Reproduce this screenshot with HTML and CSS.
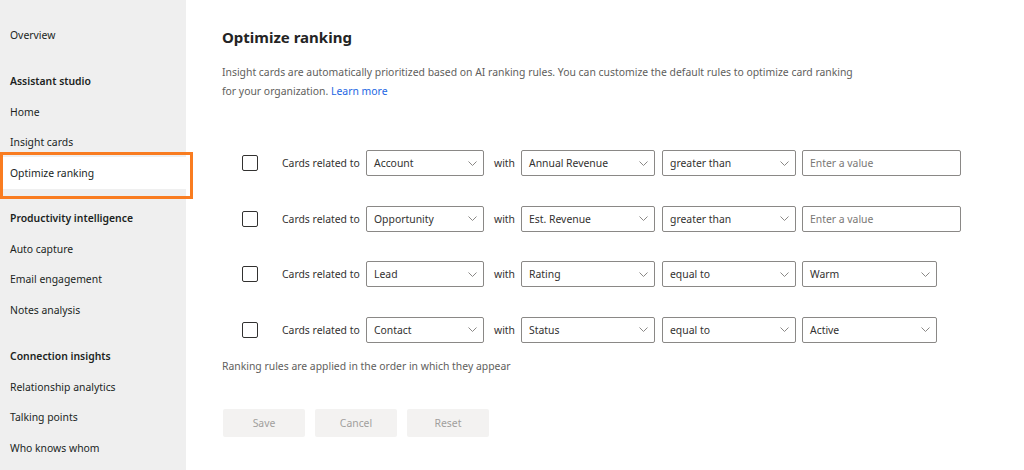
FILE: index.html
```html
<!DOCTYPE html>
<html lang="en">
<head>
<meta charset="utf-8">
<title>Optimize ranking</title>
<link rel="stylesheet" href="styles.css">
</head>
<body>
<div class="app">
  <nav class="sidebar">
    <div class="group">
      <a class="nav-item">Overview</a>
    </div>
    <div class="group">
      <div class="nav-head">Assistant studio</div>
      <a class="nav-item">Home</a>
      <a class="nav-item">Insight cards</a>
      <a class="nav-item active">Optimize ranking</a>
    </div>
    <div class="group">
      <div class="nav-head">Productivity intelligence</div>
      <a class="nav-item">Auto capture</a>
      <a class="nav-item">Email engagement</a>
      <a class="nav-item">Notes analysis</a>
    </div>
    <div class="group">
      <div class="nav-head">Connection insights</div>
      <a class="nav-item">Relationship analytics</a>
      <a class="nav-item">Talking points</a>
      <a class="nav-item">Who knows whom</a>
    </div>
    <div class="highlight-box"></div>
  </nav>

  <main class="main">
    <h1 class="title">Optimize ranking</h1>
    <p class="desc">Insight cards are automatically prioritized based on AI ranking rules. You can customize the default rules to optimize card ranking<br>for your organization. <a class="link">Learn more</a></p>

    <div class="rules">
      <div class="rule">
        <span class="checkbox"></span>
        <span class="rel-label">Cards related to</span>
        <div class="select s-entity"><span>Account</span><svg class="chev" viewBox="0 0 9 5" width="9" height="5"><path d="M0.5 0.5 L4.5 4.5 L8.5 0.5" fill="none" stroke="#8a8886" stroke-width="1"/></svg></div>
        <span class="with">with</span>
        <div class="select s-field"><span>Annual Revenue</span><svg class="chev" viewBox="0 0 9 5" width="9" height="5"><path d="M0.5 0.5 L4.5 4.5 L8.5 0.5" fill="none" stroke="#8a8886" stroke-width="1"/></svg></div>
        <div class="select s-op"><span>greater than</span><svg class="chev" viewBox="0 0 9 5" width="9" height="5"><path d="M0.5 0.5 L4.5 4.5 L8.5 0.5" fill="none" stroke="#8a8886" stroke-width="1"/></svg></div>
        <div class="input"><span class="placeholder">Enter a value</span></div>
      </div>
      <div class="rule">
        <span class="checkbox"></span>
        <span class="rel-label">Cards related to</span>
        <div class="select s-entity"><span>Opportunity</span><svg class="chev" viewBox="0 0 9 5" width="9" height="5"><path d="M0.5 0.5 L4.5 4.5 L8.5 0.5" fill="none" stroke="#8a8886" stroke-width="1"/></svg></div>
        <span class="with">with</span>
        <div class="select s-field"><span>Est. Revenue</span><svg class="chev" viewBox="0 0 9 5" width="9" height="5"><path d="M0.5 0.5 L4.5 4.5 L8.5 0.5" fill="none" stroke="#8a8886" stroke-width="1"/></svg></div>
        <div class="select s-op"><span>greater than</span><svg class="chev" viewBox="0 0 9 5" width="9" height="5"><path d="M0.5 0.5 L4.5 4.5 L8.5 0.5" fill="none" stroke="#8a8886" stroke-width="1"/></svg></div>
        <div class="input"><span class="placeholder">Enter a value</span></div>
      </div>
      <div class="rule">
        <span class="checkbox"></span>
        <span class="rel-label">Cards related to</span>
        <div class="select s-entity"><span>Lead</span><svg class="chev" viewBox="0 0 9 5" width="9" height="5"><path d="M0.5 0.5 L4.5 4.5 L8.5 0.5" fill="none" stroke="#8a8886" stroke-width="1"/></svg></div>
        <span class="with">with</span>
        <div class="select s-field"><span>Rating</span><svg class="chev" viewBox="0 0 9 5" width="9" height="5"><path d="M0.5 0.5 L4.5 4.5 L8.5 0.5" fill="none" stroke="#8a8886" stroke-width="1"/></svg></div>
        <div class="select s-op"><span>equal to</span><svg class="chev" viewBox="0 0 9 5" width="9" height="5"><path d="M0.5 0.5 L4.5 4.5 L8.5 0.5" fill="none" stroke="#8a8886" stroke-width="1"/></svg></div>
        <div class="select s-val"><span>Warm</span><svg class="chev" viewBox="0 0 9 5" width="9" height="5"><path d="M0.5 0.5 L4.5 4.5 L8.5 0.5" fill="none" stroke="#8a8886" stroke-width="1"/></svg></div>
      </div>
      <div class="rule">
        <span class="checkbox"></span>
        <span class="rel-label">Cards related to</span>
        <div class="select s-entity"><span>Contact</span><svg class="chev" viewBox="0 0 9 5" width="9" height="5"><path d="M0.5 0.5 L4.5 4.5 L8.5 0.5" fill="none" stroke="#8a8886" stroke-width="1"/></svg></div>
        <span class="with">with</span>
        <div class="select s-field"><span>Status</span><svg class="chev" viewBox="0 0 9 5" width="9" height="5"><path d="M0.5 0.5 L4.5 4.5 L8.5 0.5" fill="none" stroke="#8a8886" stroke-width="1"/></svg></div>
        <div class="select s-op"><span>equal to</span><svg class="chev" viewBox="0 0 9 5" width="9" height="5"><path d="M0.5 0.5 L4.5 4.5 L8.5 0.5" fill="none" stroke="#8a8886" stroke-width="1"/></svg></div>
        <div class="select s-val"><span>Active</span><svg class="chev" viewBox="0 0 9 5" width="9" height="5"><path d="M0.5 0.5 L4.5 4.5 L8.5 0.5" fill="none" stroke="#8a8886" stroke-width="1"/></svg></div>
      </div>
    </div>

    <p class="note">Ranking rules are applied in the order in which they appear</p>

    <div class="actions">
      <button class="btn">Save</button>
      <button class="btn">Cancel</button>
      <button class="btn">Reset</button>
    </div>
  </main>
</div>
</body>
</html>
```

FILE: styles.css
```css
* { box-sizing: border-box; }

html, body {
  margin: 0;
  padding: 0;
  background: #ffffff;
  font-family: "Noto Sans", "Open Sans", Arial, sans-serif;
  color: #323130;
}

.app {
  display: flex;
  height: 470px;
}

.sidebar {
  position: relative;
  width: 186px;
  flex: 0 0 186px;
  background: #efefef;
  padding-top: 19.5px;
  display: flex;
  flex-direction: column;
  gap: 16px;
}

.group {
  display: flex;
  flex-direction: column;
}

.nav-item,
.nav-head {
  display: flex;
  align-items: center;
  height: 30.5px;
  padding-left: 10px;
  font-size: 10.4px;
  color: #201f1e;
  white-space: nowrap;
}

.nav-head {
  font-weight: 600;
}

.nav-item.active {
  background: #ffffff;
  height: 32px;
  margin-bottom: -1.5px;
  margin-top: -1px;
}

.highlight-box {
  position: absolute;
  left: 0;
  top: 152px;
  width: 193px;
  height: 47px;
  border: 3px solid #f97c20;
  pointer-events: none;
}

.main {
  flex: 1;
  padding: 27px 0 0 36px;
}

.title {
  margin: 0;
  font-size: 15px;
  line-height: 20px;
  font-weight: 700;
  color: #242424;
}

.desc {
  margin: 16px 0 0;
  font-size: 10.4px;
  line-height: 19px;
  color: #605e5c;
}

.link {
  color: #2266e3;
}

.rules {
  margin-top: 49px;
  display: flex;
  flex-direction: column;
  gap: 29.5px;
}

.rule {
  display: flex;
  align-items: center;
  height: 26px;
  padding-left: 20px;
  font-size: 10.4px;
}

.checkbox {
  width: 16px;
  height: 16px;
  border: 1px solid #323130;
  border-radius: 2px;
  margin-right: 24px;
  flex: none;
}

.rel-label {
  width: 77px;
  margin-right: 7px;
  white-space: nowrap;
  color: #323130;
}

.with {
  width: 20px;
  margin: 0 7px 0 10px;
  color: #323130;
}

.select,
.input {
  height: 26px;
  border: 1px solid #8a8886;
  border-radius: 2px;
  display: flex;
  align-items: center;
  justify-content: space-between;
  padding: 0 6px 0 7px;
  color: #323130;
  flex: none;
  white-space: nowrap;
}

.chev {
  flex: none;
}

.s-entity { width: 118px; }
.s-field { width: 134px; margin-right: 7px; }
.s-op { width: 134px; margin-right: 6px; }
.s-val { width: 135px; }
.input { width: 159px; }

.placeholder {
  color: #797775;
}

.note {
  margin: 14.5px 0 0;
  font-size: 10.4px;
  line-height: 19px;
  color: #605e5c;
}

.actions {
  margin-top: 32.5px;
  display: flex;
  gap: 10px;
  padding-left: 1px;
}

.btn {
  width: 82px;
  height: 28px;
  border: none;
  border-radius: 2px;
  background: #f3f2f1;
  color: #a19f9d;
  font-family: inherit;
  font-size: 10.4px;
  font-weight: 400;
  padding: 0;
}
```
